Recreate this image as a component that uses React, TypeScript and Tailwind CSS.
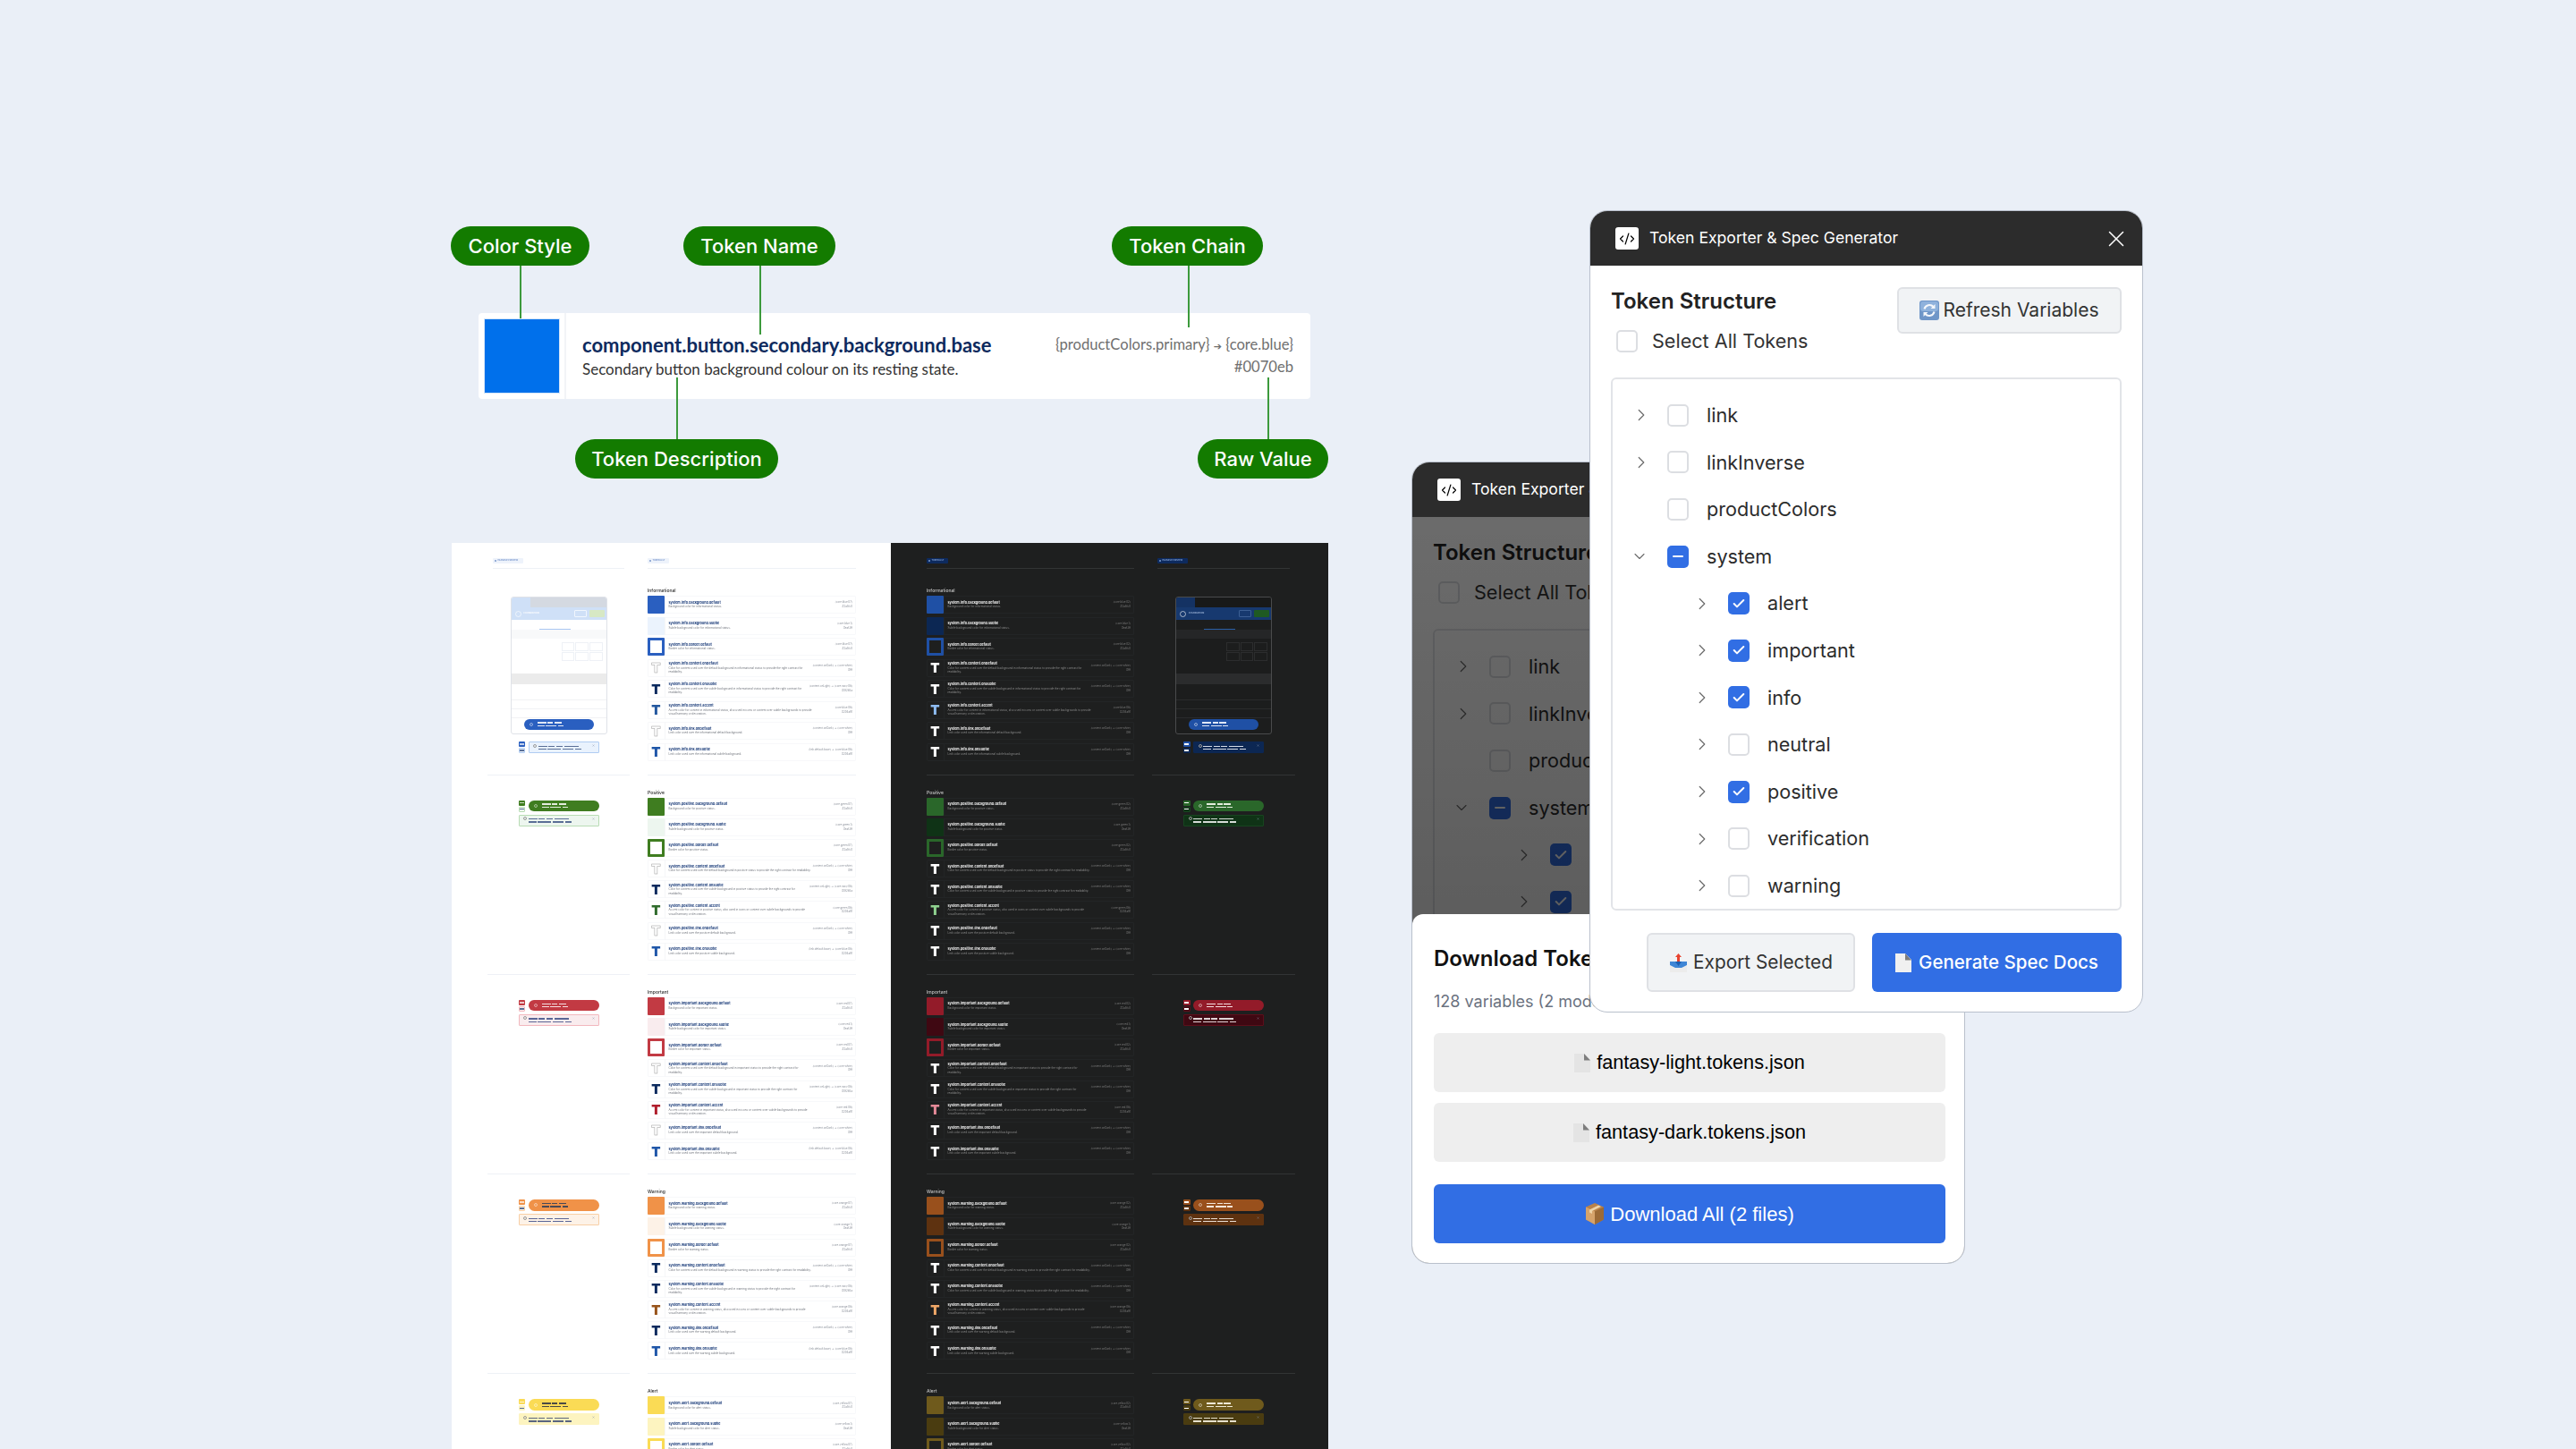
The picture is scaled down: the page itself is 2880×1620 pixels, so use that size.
import { Check, ChevronDown, ChevronRight, CodeXml, X } from "lucide-react"

const OUTLINE = "text-white [-webkit-text-stroke:0.5px_#9a9a9a]"
const NAVY = "text-[#0b2a5e]"
const LINK_BLUE = "text-[#1f56a8]"
const WHITE = "text-white"

type Palette = {
    fill: string
    subtle: string
    ring: string
    alert: string
    pillBar: string
    alertBar: string
    glyphs: string[]
}

const onDark = "{content.onDark} → {core.white}"
const onLight = "{content.onLight} → {core.navy.08}"

const sections: {
    key: string
    title: string
    word: string
    core: string
    light: Palette
    dark: Palette
}[] = [
    {
        key: "info",
        title: "Informational",
        word: "informational",
        core: "blue",
        light: {
            fill: "bg-[#2a5fc0]",
            subtle: "bg-[#ebf3fd]",
            ring: "border-[#2a5fc0]",
            alert: "bg-[#e9f2fd] border-[#b0ccf2]",
            pillBar: "bg-[#dfe7f6]",
            alertBar: "bg-[#5a6f96]",
            glyphs: [OUTLINE, NAVY, "text-[#24589f]", OUTLINE, LINK_BLUE],
        },
        dark: {
            fill: "bg-[#1f50a5]",
            subtle: "bg-[#0c2753]",
            ring: "border-[#1f50a5]",
            alert: "bg-[#0c2753] border-[#0c2753]",
            pillBar: "bg-[#dfe7f6]",
            alertBar: "bg-[#d5dbe6]",
            glyphs: [WHITE, WHITE, "text-[#8ebcf2]", WHITE, WHITE],
        },
    },
    {
        key: "positive",
        title: "Positive",
        word: "positive",
        core: "green",
        light: {
            fill: "bg-[#3f7d20]",
            subtle: "bg-[#edf6ef]",
            ring: "border-[#3f7d20]",
            alert: "bg-[#edf6ef] border-[#b8dcb4]",
            pillBar: "bg-[#e3ecdd]",
            alertBar: "bg-[#5a6f96]",
            glyphs: [OUTLINE, NAVY, "text-[#2f6b2c]", OUTLINE, LINK_BLUE],
        },
        dark: {
            fill: "bg-[#2a672a]",
            subtle: "bg-[#0f3316]",
            ring: "border-[#2a672a]",
            alert: "bg-[#0f3316] border-[#17451f]",
            pillBar: "bg-[#e3ecdd]",
            alertBar: "bg-[#d5dbd6]",
            glyphs: [WHITE, WHITE, "text-[#8fd18f]", WHITE, WHITE],
        },
    },
    {
        key: "important",
        title: "Important",
        word: "important",
        core: "red",
        light: {
            fill: "bg-[#c23a43]",
            subtle: "bg-[#f9ecee]",
            ring: "border-[#c23a43]",
            alert: "bg-[#f9ecee] border-[#f2b8be]",
            pillBar: "bg-[#f5dfe1]",
            alertBar: "bg-[#5a6596]",
            glyphs: [OUTLINE, NAVY, "text-[#b01e2c]", OUTLINE, LINK_BLUE],
        },
        dark: {
            fill: "bg-[#931b29]",
            subtle: "bg-[#3f0812]",
            ring: "border-[#931b29]",
            alert: "bg-[#3f0812] border-[#5c0e1a]",
            pillBar: "bg-[#f5dfe1]",
            alertBar: "bg-[#e0d4d6]",
            glyphs: [WHITE, WHITE, "text-[#e58a98]", WHITE, WHITE],
        },
    },
    {
        key: "warning",
        title: "Warning",
        word: "warning",
        core: "orange",
        light: {
            fill: "bg-[#f09248]",
            subtle: "bg-[#fdf2e7]",
            ring: "border-[#f09248]",
            alert: "bg-[#fdf2e7] border-[#f8cfa5]",
            pillBar: "bg-[#4a4a55]",
            alertBar: "bg-[#5a6596]",
            glyphs: [NAVY, NAVY, "text-[#97531a]", NAVY, LINK_BLUE],
        },
        dark: {
            fill: "bg-[#99501c]",
            subtle: "bg-[#5e3210]",
            ring: "border-[#99501c]",
            alert: "bg-[#5e3210] border-[#5e3210]",
            pillBar: "bg-[#f3e6da]",
            alertBar: "bg-[#eadfd5]",
            glyphs: [WHITE, WHITE, "text-[#f0a868]", WHITE, WHITE],
        },
    },
    {
        key: "alert",
        title: "Alert",
        word: "alert",
        core: "yellow",
        light: {
            fill: "bg-[#fadb55]",
            subtle: "bg-[#fdf4c0]",
            ring: "border-[#fadb55]",
            alert: "bg-[#fdf4c0] border-[#fdf4c0]",
            pillBar: "bg-[#4a4a45]",
            alertBar: "bg-[#5a6580]",
            glyphs: [NAVY, NAVY, "text-[#8a6d1e]", NAVY, LINK_BLUE],
        },
        dark: {
            fill: "bg-[#6f5a1c]",
            subtle: "bg-[#4a3c10]",
            ring: "border-[#6f5a1c]",
            alert: "bg-[#4a3c10] border-[#4a3c10]",
            pillBar: "bg-[#efe9d6]",
            alertBar: "bg-[#e6e0cc]",
            glyphs: [WHITE, WHITE, "text-[#f0d774]", WHITE, WHITE],
        },
    },
]

const tokenRows = (key: string, word: string, core: string, p: Palette, isDark: boolean) => {
    const sys = `system.${key}`
    const step = isDark ? ".02" : ".07"
    return [
        { name: `${sys}.background.default`, desc: `Background color for ${word} status.`, kind: "fill", chain: `{core.${core}${step}}`, hex: "#2a5fc0" },
        { name: `${sys}.background.subtle`, desc: `Subtle background color for ${word} status.`, kind: "subtle", chain: `{core.${core}.1}`, hex: "#eaf3ff" },
        { name: `${sys}.border.default`, desc: `Border color for ${word} status.`, kind: "ring", chain: `{core.${core}${step}}`, hex: "#2a5fc0" },
        { name: `${sys}.content.onDefault`, desc: `Color for content used over the default background in ${word} status to provide the right contrast for readability.`, kind: p.glyphs[0], chain: onDark, hex: "#fff" },
        { name: `${sys}.content.onSubtle`, desc: `Color for content used over the subtle background in ${word} status to provide the right contrast for readability.`, kind: p.glyphs[1], chain: isDark ? onDark : onLight, hex: isDark ? "#fff" : "#0f285a" },
        { name: `${sys}.content.accent`, desc: `Accent color for content in ${word} status, also used in icons or content over subtle backgrounds to provide visual harmony or decoration.`, kind: p.glyphs[2], chain: `{core.${core}.08}`, hex: "#204a91" },
        { name: `${sys}.link.onDefault`, desc: `Link color used over the ${word} default background.`, kind: p.glyphs[3], chain: onDark, hex: "#fff" },
        { name: `${sys}.link.onSubtle`, desc: `Link color used over the ${word} subtle background.`, kind: p.glyphs[4], chain: isDark ? onDark : "{link.default.base} → {core.blue.08}", hex: isDark ? "#fff" : "#204a91" },
    ]
}

const TokenRow = ({ row, p, isDark }: { row: ReturnType<typeof tokenRows>[number]; p: Palette; isDark: boolean }) => {
    let swatch = <p className={`text-[15px] leading-none font-black font-['Inter',sans-serif] ${row.kind}`}>T</p>
    if (row.kind === "fill") swatch = <div className={`w-full h-full rounded-[1px] ${p.fill}`} />
    if (row.kind === "subtle") swatch = <div className={`w-full h-full rounded-[1px] ${p.subtle}`} />
    if (row.kind === "ring") swatch = <div className={`w-full h-full rounded-[1px] border-[3px] ${p.ring}`} />
    return (
        <div className={`h-5 flex items-center border rounded-[1px] ${isDark ? "border-[#232526]" : "border-[#f7f8fa]"}`}>
            <div className={`w-5 h-5 shrink-0 -ml-px flex items-center justify-center border-r ${isDark ? "border-[#232526]" : "border-[#f5f6f8]"}`}>
                {swatch}
            </div>
            <div className="flex-1 min-w-0 pl-[3.5px]">
                <p className={`text-[3.7px] leading-[4.6px] font-bold ${isDark ? "text-[#ececec]" : "text-[#1c3d7a]"}`}>{row.name}</p>
                <p className={`text-[3px] leading-[4.3px] max-w-[160px] ${isDark ? "text-[#8c8c8c]" : "text-[#70747c]"}`}>{row.desc}</p>
            </div>
            <div className={`shrink-0 pr-[3px] text-right text-[2.9px] leading-[4.8px] ${isDark ? "text-[#7c7c7c]" : "text-[#8a8f99]"}`}>
                <p>{row.chain}</p>
                <p>{row.hex}</p>
            </div>
        </div>
    )
}

const Bars = ({ lines, color }: { lines: number[][]; color: string }) => (
    <div className="flex flex-col gap-[2px]">
        {lines.map((line, i) => (
            <div key={i} className="flex gap-[1.7px]">
                {line.map((w, j) => (
                    <div key={j} className={`h-[1.4px] ${color}`} style={{ width: w }} />
                ))}
            </div>
        ))}
    </div>
)

const Chips = ({ p, isDark }: { p: Palette; isDark: boolean }) => (
    <div className="w-[7.5px] shrink-0 flex flex-col gap-[1px] mr-[3.5px]">
        <div className={`h-[6px] rounded-[1px] flex items-center justify-center ${p.fill}`}>
            <div className={`w-[5px] h-[1.4px] ${isDark ? "bg-white" : "bg-white/70"}`} />
        </div>
        <div className={`h-[6px] rounded-[1px] border-[0.5px] flex items-center justify-center ${p.alert}`}>
            <div className={`w-[5px] h-[1.4px] ${isDark ? "bg-white" : "bg-[#5a6f96]"}`} />
        </div>
    </div>
)

const Pill = ({ p, className }: { p: Palette; className?: string }) => (
    <div className={`h-[12.5px] rounded-full flex items-center pl-[6px] gap-[5px] ${p.fill} ${className ?? ""}`}>
        <div className="w-[4px] h-[4px] rounded-full border-[0.5px] border-white/50" />
        <Bars lines={[[10, 6, 8], [8, 12, 6]]} color={p.pillBar} />
    </div>
)

const AlertBox = ({ p, className }: { p: Palette; className?: string }) => (
    <div className={`relative h-[13px] rounded-[1px] border-[0.7px] pl-[10px] pt-[3.5px] ${p.alert} ${className ?? ""}`}>
        <div className="absolute left-[4.5px] top-[1.5px] w-[4px] h-[4px] rounded-full border-[0.5px] border-[#9a9a9a]" />
        <X size={3} strokeWidth={3} className="absolute right-[4px] top-[2px] text-[#8a93a8]" />
        <Bars lines={[[10, 7, 7, 16], [9, 15, 12, 7]]} color={p.alertBar} />
    </div>
)

const PhoneMock = ({ p, isDark }: { p: Palette; isDark: boolean }) => {
    const faint = isDark ? "bg-[#252627]" : "bg-[#f8f9fa]"
    const cell = isDark ? "border-[#2c2d2e]" : "border-[#eef1f6]"
    const line = isDark ? "border-[#2a2b2c]" : "border-[#f1f2f4]"
    return (
        <div className={`relative w-[108px] h-[154px] rounded-[3px] overflow-hidden border-[1.2px] ${isDark ? "border-[#4a4b4c] bg-[#1c1d1d]" : "border-[#dfe2e8] bg-white"}`}>
            <div className="flex h-[11px]">
                <div className={`w-[21px] ${isDark ? "bg-[#143263]" : "bg-[#cfe0f7]"}`} />
                <div className={`flex-1 ${isDark ? "bg-[#181919]" : "bg-[#d4d9e1]"}`} />
            </div>
            <div className={`h-[14px] flex items-center pl-[4px] gap-[3px] ${isDark ? "bg-[#17396f]" : "bg-[#cfe0f7]"}`}>
                <div className="w-[7px] h-[7px] rounded-full border-[0.5px] border-white/60" />
                <p className={`text-[2.6px] font-bold ${isDark ? "text-[#9fb6d8]" : "text-white"}`}>FOUNDATION</p>
                <div className="flex-1" />
                <div className={`w-[14px] h-[8px] rounded-[1px] border-[0.5px] ${isDark ? "border-[#3c5f94]" : "border-white/70"}`} />
                <div className={`w-[17px] h-[8px] rounded-[1px] mr-[2px] ${isDark ? "bg-[#1f5a22]" : "bg-[#d7e8c4]"}`} />
            </div>
            <div className="h-[11px] relative">
                <div className={`absolute left-[31px] bottom-0 w-[35px] h-[0.8px] ${isDark ? "bg-[#2a5fa8]" : "bg-[#a9c6f2]"}`} />
            </div>
            <div className={`h-[10px] ${faint}`} />
            <div className="mt-[4px] ml-[56px] grid grid-cols-3 gap-[1px] w-[46px]">
                {[0, 1, 2, 3, 4, 5].map((i) => (
                    <div key={i} className={`h-[10px] border-[0.5px] ${cell}`} />
                ))}
            </div>
            <div className={`mt-[14px] h-[12px] ${isDark ? "bg-[#2b2c2d]" : "bg-[#ebebeb]"}`} />
            <div className={`mt-[8px] h-[10px] border-b ${line}`} />
            <div className={`h-[10px] border-b ${line}`} />
            <div className={`h-[10px] border-b ${line}`} />
            <Pill p={p} className="absolute left-[14px] bottom-[4px] w-[78px]" />
        </div>
    )
}

const SheetTag = ({ label, isDark, className }: { label: string; isDark: boolean; className: string }) => (
    <div className={`h-[6px] rounded-[1px] flex items-center gap-[1px] px-[2px] text-[2.4px] font-medium ${className} ${isDark ? "bg-[#0d2a5e] text-[#9dbdf0]" : "bg-[#eef3fb] text-[#5b7fc0]"}`}>
        <span className="w-[2.4px] h-[2.4px] rounded-full border-[0.4px] border-current" />
        {label}
    </div>
)

const SheetHalf = ({ isDark }: { isDark: boolean }) => {
    const rule = isDark ? "border-[#323435]" : "border-[#eef1f6]"
    return (
        <div className={isDark ? "w-[489px] pl-10 pr-[37px] pt-[17px] bg-[#1e1f1f]" : "w-[491px] pl-10 pr-[39px] pt-[17px] bg-white"}>
            <div className="blur-[0.35px]">
                <div className={`flex gap-5 ${isDark ? "flex-row-reverse" : ""}`}>
                    <div className={`${isDark ? "w-[160px]" : "w-[159px]"} px-[6px]`}>
                        <SheetTag label="EXAMPLE PREVIEW" isDark={isDark} className="w-[34px]" />
                        <div className={`mt-[5px] border-t-[1.5px] ${rule}`} />
                    </div>
                    <div className="flex-1">
                        <SheetTag label="TOKEN LIST" isDark={isDark} className="w-[24px]" />
                        <div className={`mt-[5px] border-t-[1.5px] ${rule}`} />
                    </div>
                </div>
                {sections.map((s, idx) => {
                    const p = isDark ? s.dark : s.light
                    const first = idx === 0
                    return (
                        <div key={s.key} className={`flex gap-5 ${isDark ? "flex-row-reverse" : ""}`}>
                            <div className={`${isDark ? "w-[160px]" : "w-[159px]"} flex flex-col items-center ${first ? "pt-[31px]" : `pt-[28px] border-t-[1.5px] ${rule}`}`}>
                                {first ? (
                                    <>
                                        <PhoneMock p={p} isDark={isDark} />
                                        <div className="mt-2 flex">
                                            <Chips p={p} isDark={isDark} />
                                            <AlertBox p={p} className="w-[79px]" />
                                        </div>
                                    </>
                                ) : (
                                    <>
                                        <div className="flex">
                                            <Chips p={p} isDark={isDark} />
                                            <Pill p={p} className="w-[79px]" />
                                        </div>
                                        <AlertBox p={p} className="mt-[3px] w-[90px]" />
                                    </>
                                )}
                            </div>
                            <div className={`flex-1 ${first ? "pt-5 pb-[15px]" : `pt-[15px] pb-[15px] border-t-[1.5px] ${rule}`}`}>
                                <p className={`h-2 text-[5px] leading-2 font-medium ${isDark ? "text-[#c4c4c4]" : "text-[#2c2c2c]"}`}>{s.title}</p>
                                <div className={`mt-[2px] flex flex-col ${first ? "gap-[3.5px]" : "gap-[3.2px]"}`}>
                                    {tokenRows(s.key, s.word, s.core, p, isDark).map((row) => (
                                        <TokenRow key={row.name} row={row} p={p} isDark={isDark} />
                                    ))}
                                </div>
                            </div>
                        </div>
                    )
                })}
            </div>
        </div>
    )
}

const Callout = ({ label, className }: { label: string; className: string }) => (
    <div className={`absolute h-11 rounded-[22px] bg-[#137b00] flex items-center justify-center text-[22px] font-medium text-white ${className}`}>
        {label}
    </div>
)

const Leader = ({ className }: { className: string }) => (
    <div className={`absolute w-[1.5px] bg-[#3c9a3c] ${className}`} />
)

const Annotation = () => (
    <div className="relative w-[981px] h-[282px] pt-[97px] pl-[31px]">
        <div className="w-[930px] h-24 bg-white rounded-[4px] flex items-center pl-[6px] pr-[19px]">
            <div className="w-[85px] h-[84px] bg-[#0070eb] border border-[#d3e4f8]" />
            <div className="h-24 ml-[5px] border-l-2 border-[#f2f4f7]" />
            <div className="flex-1 pl-[18px] font-['Lato',sans-serif]">
                <p className="text-[22px] leading-[28px] font-bold text-[#0d2a5e]">component.button.secondary.background.base</p>
                <p className="mt-[2px] text-[17px] leading-[22px] text-[#333]">Secondary button background colour on its resting state.</p>
            </div>
            <div className="text-right font-['Lato',sans-serif] text-[16.6px] leading-[23px] text-[#6f6f6f]">
                <p>
                    {"{productColors.primary} "}
                    <span className="text-[11px] font-['DejaVu_Sans',sans-serif]">➔</span>
                    {" {core.blue}"}
                </p>
                <p>#0070eb</p>
            </div>
        </div>
        <Leader className="left-[77px] top-11 h-[59px]" />
        <Leader className="left-[345px] top-11 h-[77px]" />
        <Leader className="left-[824px] top-11 h-[69px]" />
        <Leader className="left-[252px] top-[169px] h-[69px]" />
        <Leader className="left-[913px] top-[169px] h-[69px]" />
        <Callout label="Color Style" className="left-0 top-0 w-[155px]" />
        <Callout label="Token Name" className="left-[260px] top-0 w-[170px]" />
        <Callout label="Token Chain" className="left-[739px] top-0 w-[169px]" />
        <Callout label="Token Description" className="left-[139px] top-[238px] w-[227px]" />
        <Callout label="Raw Value" className="left-[835px] top-[238px] w-[146px]" />
    </div>
)

const PageIcon = ({ paper }: { paper: string }) => (
    <svg width="18" height="21" viewBox="0 0 18 21" className="shrink-0">
        <path d="M0 0h11l7 7v14H0z" fill={paper} />
        <path d="M11 0l7 7.5h-7z" fill="#7d7d7d" />
    </svg>
)

const OutboxIcon = () => (
    <svg width="21" height="21" viewBox="0 0 21 21" className="shrink-0">
        <rect x="1" y="14" width="19" height="7" fill="#ececec" />
        <path d="M1 9h19v4l-6 3H7l-6-3z" fill="#3f86d6" />
        <path d="M7 9h7l-3.5 5z" fill="#1f5fb0" />
        <path d="M10.500 0l3.500 4h-2v5h-3V4H7z" fill="#e8432f" />
    </svg>
)

const PackageIcon = () => (
    <svg width="22" height="24" viewBox="0 0 22 24" className="shrink-0">
        <path d="M11 0l10 4.500v14L11 24 1 18.500v-14z" fill="#b9824a" />
        <path d="M11 9.500L1 4.500v14L11 24z" fill="#d6a36b" />
        <path d="M11 9.500l10-5v14L11 24z" fill="#9c6a36" />
        <path d="M15 2.500l-10 5v3l3 1.500v-3l10-5z" fill="#eed3a8" />
    </svg>
)

const RefreshIcon = () => (
    <svg width="22" height="22" viewBox="0 0 22 22" className="shrink-0">
        <rect width="22" height="22" rx="3" fill="#6f96c8" />
        <rect x="1" y="1" width="20" height="11" rx="3" fill="#8fb2dc" />
        <path d="M5.500 9.500A5.800 5.800 0 0 1 15.500 7" fill="none" stroke="#f4f7fb" strokeWidth="2.200" />
        <path d="M17.500 4v5h-5z" fill="#f4f7fb" />
        <path d="M16.500 12.500A5.800 5.800 0 0 1 6.500 15" fill="none" stroke="#f4f7fb" strokeWidth="2.200" />
        <path d="M4.500 18v-5h5z" fill="#f4f7fb" />
    </svg>
)

const CheckBox = ({ state }: { state: "off" | "on" | "mixed" }) => {
    if (state === "on")
        return (
            <div className="w-6 h-[25px] shrink-0 rounded-[5px] bg-[#316ee4] flex items-center justify-center">
                <Check size={16} strokeWidth={3} className="text-white" />
            </div>
        )
    if (state === "mixed")
        return (
            <div className="w-6 h-[25px] shrink-0 rounded-[5px] bg-[#316ee4] flex items-center justify-center">
                <div className="w-3 h-[2.5px] rounded-full bg-white" />
            </div>
        )
    return <div className="w-6 h-[25px] shrink-0 rounded-[5px] border-2 border-[#dcdee2] bg-white" />
}

const treeRows: { label: string; child?: boolean; state: "off" | "on" | "mixed"; chevron?: "right" | "down" }[] = [
    { label: "link", state: "off", chevron: "right" },
    { label: "linkInverse", state: "off", chevron: "right" },
    { label: "productColors", state: "off" },
    { label: "system", state: "mixed", chevron: "down" },
    { label: "alert", child: true, state: "on", chevron: "right" },
    { label: "important", child: true, state: "on", chevron: "right" },
    { label: "info", child: true, state: "on", chevron: "right" },
    { label: "neutral", child: true, state: "off", chevron: "right" },
    { label: "positive", child: true, state: "on", chevron: "right" },
    { label: "verification", child: true, state: "off", chevron: "right" },
    { label: "warning", child: true, state: "off", chevron: "right" },
]

const TokenTree = () => (
    <div className="h-[596px] overflow-hidden rounded-md border-2 border-[#e2e4e8] pt-[14px] pl-5">
        {treeRows.map((row) => (
            <div key={row.label} className={`h-[52.6px] flex items-center ${row.child ? "pl-[68px]" : ""}`}>
                <div className="w-6 flex justify-center text-[#6b6b6b] mr-[17px]">
                    {row.chevron === "right" && <ChevronRight size={22} strokeWidth={1.3} />}
                    {row.chevron === "down" && <ChevronDown size={20} strokeWidth={1.3} className="-ml-[5px]" />}
                </div>
                <CheckBox state={row.state} />
                <p className="ml-5 text-[21.6px] text-[#2c2c2c]">{row.label}</p>
            </div>
        ))}
    </div>
)

const WindowBody = () => (
    <>
        <div className="h-[61px] bg-[#2c2c2c] flex items-center pl-7 pr-[14px]">
            <div className="w-[26px] h-[25px] rounded-[3px] bg-white flex items-center justify-center text-black">
                <CodeXml size={18} strokeWidth={1.6} />
            </div>
            <p className="ml-3 text-[17.6px] text-white">Token Exporter &amp; Spec Generator</p>
            <X size={30} strokeWidth={1.2} className="ml-auto text-white" />
        </div>
        <div className="px-[23px] pt-6">
            <div className="h-[101px] flex items-start justify-between">
                <div>
                    <p className="h-8 text-2xl leading-8 font-semibold text-[#222]">Token Structure</p>
                    <div className="mt-3 ml-[6px] flex items-center gap-4">
                        <CheckBox state="off" />
                        <p className="text-[21.6px] text-[#333]">Select All Tokens</p>
                    </div>
                </div>
                <button className="w-[251px] h-[52px] flex items-center justify-center gap-[4px] rounded-md border-2 border-[#dfe1e5] bg-[#f1f3f5] text-[21px] text-[#333]">
                    <RefreshIcon />
                    Refresh Variables
                </button>
            </div>
            <TokenTree />
        </div>
    </>
)

const FrontWindow = () => (
    <div className="absolute left-[1777px] top-[235px] w-[619px] h-[897px] rounded-[20px] overflow-hidden border-[1.5px] border-[#b9c0cc] bg-white">
        <WindowBody />
        <div className="px-[23px] mt-[25px] flex justify-end gap-[19px]">
            <button className="w-[233px] h-[66px] flex items-center justify-center gap-[6px] rounded-md border-2 border-[#dfe1e5] bg-[#f1f3f5] text-[20.8px] text-[#333]">
                <OutboxIcon />
                Export Selected
            </button>
            <button className="w-[279px] h-[66px] flex items-center justify-center gap-2 rounded-md bg-[#316ee4] text-[20.5px] font-medium text-white">
                <PageIcon paper="#f0f0f0" />
                Generate Spec Docs
            </button>
        </div>
    </div>
)

const BackWindow = () => (
    <div className="absolute left-[1578px] top-[516px] w-[619px] h-[897px] rounded-[20px] overflow-hidden border-[1.5px] border-[#b9c0cc] bg-white">
        <WindowBody />
        <div className="absolute inset-x-0 top-[61px] bottom-0 bg-linear-to-b from-black/58 to-black/68" />
        <div className="absolute inset-x-0 top-[505px] bottom-0 rounded-t-[12px] bg-white pl-6 pr-[21px] pt-[34px]">
            <p className="h-8 text-2xl leading-8 font-semibold text-[#111]">Download Tokens</p>
            <p className="mt-4 h-8 text-[18px] leading-8 text-[#6b7280]">128 variables (2 modes)</p>
            <div className="mt-[19px] flex flex-col gap-3 font-['Liberation_Sans',sans-serif]">
                <button className="h-[66px] flex items-center justify-center gap-[7px] rounded-md bg-[#eeeeee] text-[21.7px] text-black">
                    <PageIcon paper="#e4e4e4" />
                    fantasy-light.tokens.json
                </button>
                <button className="h-[66px] flex items-center justify-center gap-[7px] rounded-md bg-[#eeeeee] text-[21.7px] text-black">
                    <PageIcon paper="#e4e4e4" />
                    fantasy-dark.tokens.json
                </button>
            </div>
            <button className="mt-[25px] w-full h-[66px] flex items-center justify-center gap-[6px] rounded-md bg-[#316ee4] font-['Liberation_Sans',sans-serif] text-[22px] text-white">
                <PackageIcon />
                Download All (2 files)
            </button>
        </div>
    </div>
)

export default function App() {
    return (
        <div className="relative w-[2880px] h-[1620px] overflow-hidden bg-[#eaeff7] font-['Inter',sans-serif]">
            <div className="ml-[504px] pt-[253px] w-[981px] flex flex-col">
                <Annotation />
                <div className="mt-[72px] ml-px w-[980px] h-[1013px] overflow-hidden flex">
                    <SheetHalf isDark={false} />
                    <SheetHalf isDark />
                </div>
            </div>
            <BackWindow />
            <FrontWindow />
        </div>
    )
}
